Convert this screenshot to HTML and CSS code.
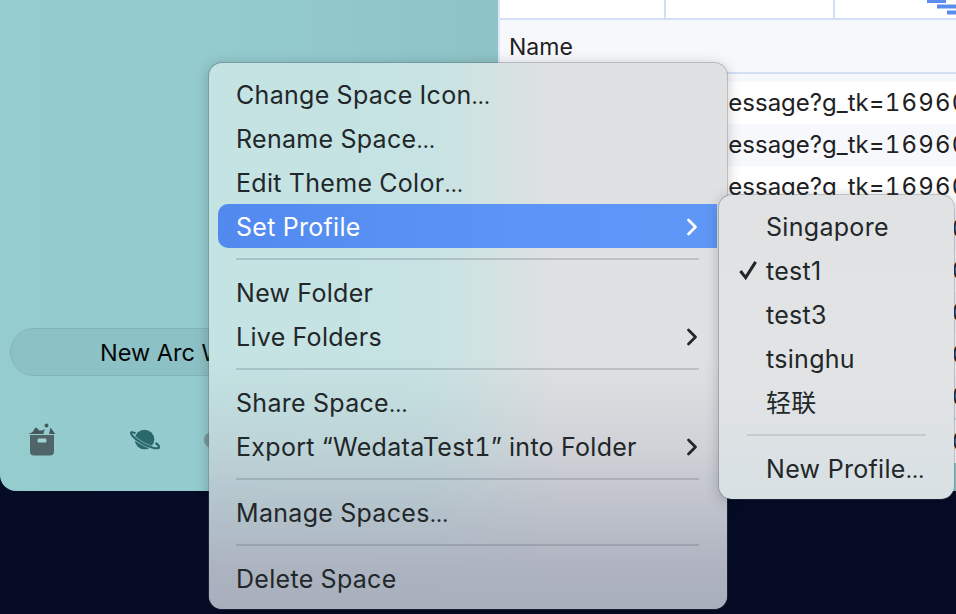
FILE: index.html
```html
<!DOCTYPE html>
<html lang="en">
<head>
<meta charset="utf-8">
<title>Arc Space Menu</title>
<link rel="stylesheet" href="styles.css">
</head>
<body>
<div class="desktop">
  <aside class="sidebar">
    <div class="new-view"><span class="new-view-label">New Arc Window</span></div>
    <div class="dock">
      <svg class="dock-icon box" viewBox="0 0 30 34" aria-hidden="true">
        <path class="slate" d="M3 12h24v16.500a4 4 0 0 1-4 4H7a4 4 0 0 1-4-4z"/>
        <rect class="teal-cut" x="10.500" y="15.500" width="9" height="4" rx="1.500"/>
        <path class="dark" d="M1 11c2-.6 4-1.200 5-2.400 1-1.400 1.800-4.100 3-4.100 1.200 0 2 2.500 3.500 3 1.800.5 4-.8 5.500-1.300-.8 1.500-1.500 3-1.400 4.800z"/>
        <circle class="dark" cx="19.500" cy="2.500" r="2"/>
        <path class="dark" d="M23.500 4.500l4.800 6.500h-6.300z"/>
      </svg>
      <svg class="dock-icon planet" viewBox="0 0 30 22" aria-hidden="true">
        <circle class="teal" cx="14.500" cy="10.500" r="9.800"/>
        <path class="ring-gap" d="M5.500 4.500C3 3 1 2.800 1 4c0 2.500 6 7.500 12.500 11 6 3.200 14 5.500 15.500 3.500.8-1-1.200-3-3.500-4.500"/>
        <path class="ring" d="M5.500 4.500C3 3 1 2.800 1 4c0 2.500 6 7.500 12.500 11 6 3.200 14 5.500 15.500 3.500.8-1-1.200-3-3.500-4.500"/>
      </svg>
      <span class="dock-dot"></span>
    </div>
  </aside>

  <main class="sheet">
    <div class="sheet-top">
      <div class="top-cell first"></div>
      <div class="top-cell second"></div>
      <div class="top-cell third">
        <svg class="sort-bars" viewBox="0 0 29 16" aria-hidden="true">
          <rect x="0" y="0" width="19" height="3"/>
          <rect x="10" y="4.500" width="19" height="4"/>
          <rect x="20" y="10.500" width="9" height="4"/>
        </svg>
      </div>
    </div>
    <div class="sheet-head">Name</div>
    <div class="sheet-gap"><div class="sheet-clip">/api/message?g_tk=<span class="num">16960</span></div></div>
    <div class="sheet-row">/api/message?g_tk=<span class="num">16960</span></div>
    <div class="sheet-row alt">/api/message?g_tk=<span class="num">16960</span></div>
    <div class="sheet-row">/api/message?g_tk=<span class="num">16960</span></div>
    <div class="sheet-row alt">/api/message?g_tk=<span class="num">16960</span></div>
    <div class="sheet-row">/api/message?g_tk=<span class="num">16960</span></div>
    <div class="sheet-row alt">/api/message?g_tk=<span class="num">16960</span></div>
    <div class="sheet-row">/api/message?g_tk=<span class="num">16960</span></div>
    <div class="sheet-row alt">/api/message?g_tk=<span class="num">16960</span></div>
    <div class="sheet-foot">/api/message?g_tk=<span class="num">16960</span></div>
  </main>

  <nav class="menu main-menu">
    <div class="item"><span>Change Space Icon<span class="dots">…</span></span></div>
    <div class="item"><span>Rename Space<span class="dots">…</span></span></div>
    <div class="item"><span>Edit Theme Color<span class="dots">…</span></span></div>
    <div class="item active"><span>Set Profile</span><svg class="chev" viewBox="0 0 12 18"><path d="M2.500 2l7 7-7 7"/></svg></div>
    <div class="sep"></div>
    <div class="item">New Folder</div>
    <div class="item"><span>Live Folders</span><svg class="chev" viewBox="0 0 12 18"><path d="M2.500 2l7 7-7 7"/></svg></div>
    <div class="sep"></div>
    <div class="item"><span>Share Space<span class="dots">…</span></span></div>
    <div class="item"><span>Export “WedataTest1” into Folder</span><svg class="chev" viewBox="0 0 12 18"><path d="M2.500 2l7 7-7 7"/></svg></div>
    <div class="sep"></div>
    <div class="item"><span>Manage Spaces<span class="dots">…</span></span></div>
    <div class="sep"></div>
    <div class="item">Delete Space</div>
  </nav>

  <nav class="menu sub-menu">
    <div class="item">Singapore</div>
    <div class="item checked"><svg class="check" viewBox="0 0 20 20"><path d="M1.500 11l5.500 7L17.500 1.500"/></svg>test1</div>
    <div class="item">test3</div>
    <div class="item">tsinghu</div>
    <div class="item">轻联</div>
    <div class="sep"></div>
    <div class="item"><span>New Profile<span class="dots">…</span></span></div>
  </nav>
</div>
</body>
</html>
```

FILE: styles.css
```css
* { box-sizing: border-box; }
html, body { margin: 0; padding: 0; }
body { width: 956px; height: 614px; overflow: hidden; background: #050b24; font-family: Inter, "Noto Sans CJK SC", sans-serif; }
.desktop { position: relative; width: 956px; height: 614px; overflow: hidden; background: #060c26; }

.sidebar { position: absolute; left: 0; top: 0; width: 956px; height: 491px;
  background: linear-gradient(90deg, #95cdcf, #93cace 30%, #8ec3c7 52%, #93c9cb);
  border-bottom-left-radius: 16px; padding: 328px 10px 0; }
.new-view { height: 48px; width: 430px; border-radius: 24px; background: #8cc1c5; border: 1px solid #82b5b9;
  display: flex; align-items: center; padding-left: 89px; }
.new-view-label { font-size: 23.500px; color: #050808; white-space: nowrap; }
.dock { display: flex; align-items: center; margin-top: 47px; padding-left: 17px; }
.dock-icon { display: block; }
.box { width: 30px; height: 34px; }
.planet { width: 30px; height: 22px; margin-left: 73px; }
.dock-dot { width: 16px; height: 16px; border-radius: 50%; background: #76999d; margin-left: 44px; }
.slate { fill: #4f6568; }
.teal-cut { fill: #a5d3d6; }
.dark { fill: #47595c; }
.teal { fill: #2b686b; }
.ring { fill: none; stroke: #2b686b; stroke-width: 2.200; }
.ring-gap { fill: none; stroke: #93cace; stroke-width: 3.400; }

.sheet { position: absolute; left: 498px; top: 0; width: 458px; height: 463px; background: #fff; border-left: 2px solid #dfe7f8; overflow: hidden; color: #1e2022; }
.sheet-top { display: flex; height: 20px; border-bottom: 2px solid #d2dff7; }
.top-cell { height: 18px; border-right: 2px solid #d2dff7; }
.first { width: 166px; box-shadow: -2px 0 0 #b5c8f5; }
.second { width: 169px; }
.third { flex: 1; border-right: 0; position: relative; }
.sort-bars { position: absolute; right: 0; top: 0; width: 29px; height: 16px; fill: #5b8def; }
.sheet-head { height: 54px; background: #f7f8fc; border-bottom: 2px solid #d2dff7; padding: 14px 9px 0; font-size: 23px; line-height: 27px; }
.sheet-gap { height: 8px; overflow: hidden; background: #f7f8fc; }
.sheet-clip { height: 42px; margin-top: -34px; padding-left: 156px; font-size: 24px; line-height: 42px; white-space: nowrap; }
.sheet-row { height: 42px; padding-left: 156px; font-size: 24px; line-height: 42px; white-space: nowrap; overflow: hidden; }
.sheet-row.alt { background: #f7f8fc; }
.sheet-foot { height: 45px; border-top: 2px solid #d2dff7; padding-left: 156px; font-size: 24px; line-height: 43px; white-space: nowrap; overflow: hidden; }
.num { font-feature-settings: "tnum"; letter-spacing: 1.200px; }

.menu { position: absolute; border-radius: 14px; border: 1px solid rgba(60,75,85,.35); box-shadow: 0 2px 14px rgba(0,0,0,.2); color: #222729; font-size: 25px; letter-spacing: .3px; }
.dots { font-size: 21.500px; letter-spacing: 0; }
.main-menu { left: 208px; top: 62px; width: 520px; height: 548px; padding: 9px 9px 0; font-feature-settings: "tnum"; background-clip: padding-box;
  background-image:
    linear-gradient(180deg, rgba(169,174,188,0) 0 54%, rgba(169,174,188,.28) 70%, rgba(169,174,188,.62) 82%, rgba(169,174,188,.88) 92%, #a9aebc 100%),
    linear-gradient(90deg, #c4e3e3 0, #c7e3e3 42%, #d6e2e2 58%, #e0e1e3 68%, #e0e1e3 100%); }
.sub-menu { left: 718px; top: 194px; width: 237px; height: 306px; padding: 9px 0 0; z-index: 2; background-clip: padding-box;
  background-image: linear-gradient(180deg, #e1e2e4 0, #e1e3e5 65%, #d7e0e3 100%); }
.item { height: 44px; display: flex; align-items: center; justify-content: space-between; padding: 2px 20px 0 18px; border-radius: 10px; white-space: nowrap; line-height: 42px; }
.sub-menu .item { justify-content: flex-start; padding-left: 47px; position: relative; }
.item.active { color: #fff; background: linear-gradient(90deg, #5289ef, #5c95f6 60%, #5f97f7); border-radius: 10px 0 0 10px; margin-right: 1px; padding-right: 19px; }
.sep { height: 2px; margin: 10px 19px 10px 18px; background: rgba(60,70,85,.2); }
.sub-menu .sep { margin: 10px 28px; background: #c7cbcd; }
.chev { width: 12px; height: 18px; fill: none; stroke: #222729; stroke-width: 2.800; stroke-linecap: round; stroke-linejoin: round; }
.active .chev { stroke: #fff; }
.check { position: absolute; left: 20px; top: 12px; width: 19px; height: 20px; fill: none; stroke: #222729; stroke-width: 3.200; }
```
